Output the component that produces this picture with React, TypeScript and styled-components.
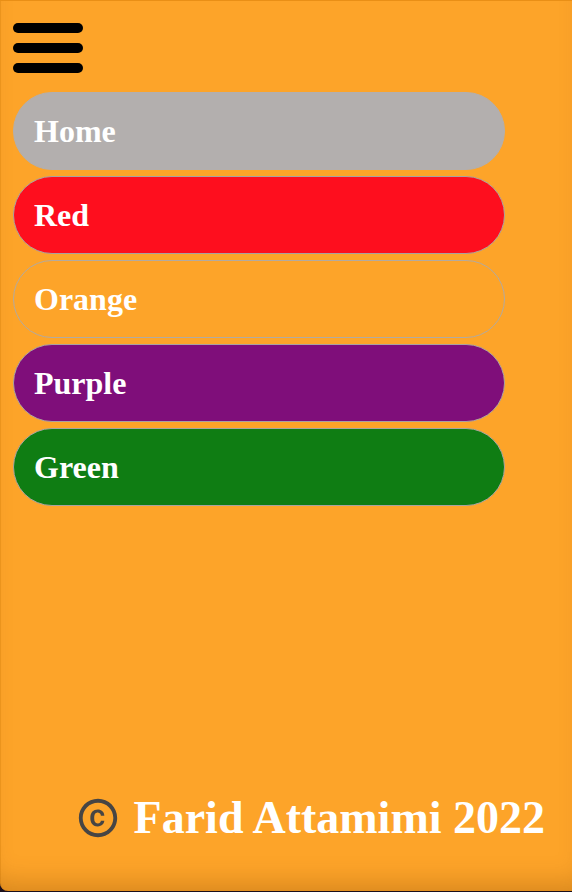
import React from "react";
import styled, { createGlobalStyle } from "styled-components";
import { MdCopyright } from "react-icons/md";

const GlobalStyle = createGlobalStyle`
  html, body {
    margin: 0;
    padding: 0;
    background: #1b0f1c;
  }
  * { box-sizing: border-box; }
`;

const Panel = styled.div`
  width: 572px;
  height: 891px;
  background: #fda429;
  border-top: 1px solid #e98f16;
  border-bottom-left-radius: 8px;
  box-shadow: inset 0 -22px 26px -14px rgba(120, 60, 0, 0.28),
    inset 1px 0 0 rgba(200, 110, 0, 0.25);
  display: flex;
  flex-direction: column;
  padding: 22px 0 0 13px;
  font-family: "Liberation Serif", "Times New Roman", serif;
`;

const Burger = styled.button`
  display: flex;
  flex-direction: column;
  gap: 10px;
  width: 70px;
  padding: 0;
  border: 0;
  background: transparent;
  cursor: pointer;
`;

const BurgerBar = styled.span`
  display: block;
  width: 70px;
  height: 10px;
  border-radius: 5px;
  background: #000;
`;

const Menu = styled.nav`
  display: flex;
  flex-direction: column;
  gap: 6px;
  margin-top: 19px;
`;

const MenuItem = styled.a<{ $bg: string; $border: string }>`
  display: flex;
  align-items: center;
  width: 492px;
  height: 78px;
  padding: 0 0 0 20px;
  border-radius: 39px;
  background: ${(p) => p.$bg};
  border: 1px solid ${(p) => p.$border};
  color: #fff;
  font-weight: 700;
  font-size: 32px;
  line-height: 1;
  text-decoration: none;
`;

const Spacer = styled.div`
  flex: 1;
`;

const Footer = styled.footer`
  display: flex;
  align-items: center;
  justify-content: flex-end;
  gap: 13px;
  padding: 0 27px 50px 0;
  color: #fff;
  font-weight: 700;
  font-size: 46px;
  line-height: 46px;
`;

const CopyIcon = styled(MdCopyright)`
  color: #474544;
  flex: none;
`;

const items = [
  { label: "Home", bg: "#b3afae", border: "#b3afae" },
  { label: "Red", bg: "#fe0e1e", border: "#a9a3a0" },
  { label: "Orange", bg: "#fda429", border: "#b3aaa0" },
  { label: "Purple", bg: "#7f0e7a", border: "#a9a3a0" },
  { label: "Green", bg: "#0f7d13", border: "#a9a3a0" },
];

export default function App() {
  return (
    <>
      <GlobalStyle />
      <Panel>
        <Burger aria-label="menu">
          <BurgerBar />
          <BurgerBar />
          <BurgerBar />
        </Burger>
        <Menu>
          {items.map((it) => (
            <MenuItem key={it.label} href="#" $bg={it.bg} $border={it.border}>
              {it.label}
            </MenuItem>
          ))}
        </Menu>
        <Spacer />
        <Footer>
          <CopyIcon size={46} />
          <span>Farid Attamimi 2022</span>
        </Footer>
      </Panel>
    </>
  );
}
